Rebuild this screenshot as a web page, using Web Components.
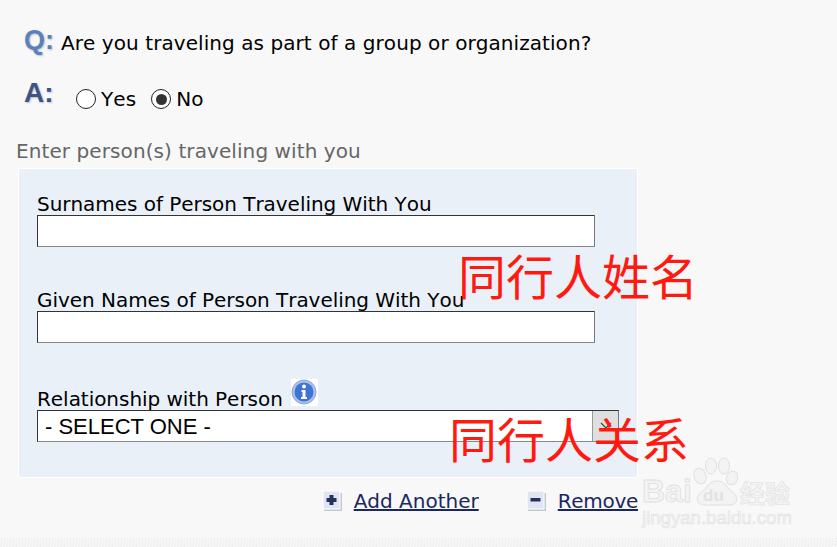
<!DOCTYPE html>
<html>
<head>
<meta charset="utf-8">
<style>
html, body { margin:0; padding:0; height:100%; }
body { background:#f8f8f8; width:837px; height:547px; overflow:hidden; font-family:"DejaVu Sans",sans-serif; color:#000; font-kerning:none; }
</style>
</head>
<body>
<visa-page>
  <qa-row slot="qa" kind="Q"><span>Are you traveling as part of a group or organization?</span></qa-row>
  <qa-row slot="qa" kind="A" class="answer"><radio-opt label="Yes"></radio-opt><radio-opt label="No" checked></radio-opt></qa-row>
  <companion-form slot="form"></companion-form>
  <link-row slot="links"></link-row>
</visa-page>

<script>
class VisaPage extends HTMLElement {
  constructor() {
    super();
    this.attachShadow({mode:'open'});
    this.shadowRoot.innerHTML = `
    <style>
      :host { display:block; position:relative; width:837px; height:547px; font-size:20px; overflow:hidden; }
      .wrap { display:flex; flex-direction:column; padding:22px 0 0 18px; }
      .heading { color:#666; margin:14px 0 5px -2px; line-height:24px; letter-spacing:.09px; }
      .dither { position:absolute; left:0; right:0; bottom:0; height:9px;
        background:repeating-conic-gradient(#f0f0f0 0 25%, #f8f8f8 0 50%) 0 0/3px 3px; }
      .note { position:absolute; color:#ff1a10; font:48px/56px "Noto Sans CJK SC",sans-serif; white-space:nowrap; }
      .n1 { left:458px; top:246px; }
      .n2 { left:449px; top:409px; }
      .mark { position:absolute; left:641px; top:456px; width:190px; height:76px; }
    </style>
    <div class="wrap">
      <slot name="qa"></slot>
      <div class="heading">Enter person(s) traveling with you</div>
      <slot name="form"></slot>
      <slot name="links"></slot>
    </div>
    <div class="dither"></div>
    <div class="note n1">同行人姓名</div>
    <div class="note n2">同行人关系</div>
    <svg class="mark" viewBox="0 0 190 76">
      <g fill="#f3f3f3" stroke="#e0e0e0" stroke-width="1">
        <ellipse cx="59" cy="20" rx="6" ry="8" transform="rotate(-20 59 20)"/>
        <ellipse cx="70" cy="10" rx="5.5" ry="8"/>
        <ellipse cx="83" cy="10" rx="5.5" ry="8"/>
        <ellipse cx="91" cy="22" rx="5.5" ry="7" transform="rotate(20 91 22)"/>
        <path d="M76 25c-8 0-9 6-14 10-5 3-7 7-5 11 2 4 10 3 19 3 9 0 17 1 19-3 2-4 0-8-5-11-5-4-6-10-14-10z"/>
      </g>
      <text x="1" y="46" font-family="Liberation Sans" font-weight="700" font-size="32" fill="#f3f3f3" stroke="#e0e0e0" stroke-width=".8">Bai</text>
      <text x="62" y="45" font-family="Liberation Sans" font-weight="700" font-size="17" fill="#e2e2e2">du</text>
      <text x="99" y="47" font-family="Noto Sans CJK SC" font-weight="700" font-size="25" fill="#f3f3f3" stroke="#e0e0e0" stroke-width=".6">经验</text>
      <text x="1" y="68" font-family="Liberation Sans" font-size="18.6" fill="#f3f3f3" stroke="#e2e2e2" stroke-width=".6">jingyan.baidu.com</text>
    </svg>`;
  }
}

class QaRow extends HTMLElement {
  constructor() {
    super();
    this.attachShadow({mode:'open'});
    const kind = this.getAttribute('kind');
    this.shadowRoot.innerHTML = `
    <style>
      :host { display:flex; align-items:flex-start; height:${kind == 'Q' ? 56 : 47}px; margin-left:6px; letter-spacing:.07px; }
      .tag { font:700 ${kind == 'Q' ? 27 : 28}px/26px "Liberation Sans",sans-serif; width:${kind == 'Q' ? 37 : 52}px; flex:none;
        color:${kind == 'Q' ? '#5a82b8' : '#3e5380'}; text-shadow:1px 1px 2px #b8c0d0; margin-top:${kind == 'Q' ? 5 : 2}px; letter-spacing:0; }
      .body { display:flex; align-items:center; line-height:24px; margin-top:9px; }
    </style>
    <div class="tag">${kind}:</div>
    <div class="body"><slot></slot></div>`;
  }
}

class RadioOpt extends HTMLElement {
  constructor() {
    super();
    this.attachShadow({mode:'open'});
    const on = this.hasAttribute('checked');
    this.shadowRoot.innerHTML = `
    <style>
      :host { display:inline-flex; align-items:center; margin-right:15px; }
      .ring { width:20px; height:20px; box-sizing:border-box; border:1px solid #222; border-radius:50%; background:#fff;
        display:flex; align-items:center; justify-content:center; margin:0 5px 0 0; }
      .dot { width:11px; height:11px; border-radius:50%; background:#333; }
    </style>
    <span class="ring">${on ? '<span class="dot"></span>' : ''}</span><span>${this.getAttribute('label')}</span>`;
  }
}

class FormField extends HTMLElement {
  constructor() {
    super();
    this.attachShadow({mode:'open'});
    this.shadowRoot.innerHTML = `
    <style>
      :host { display:block; }
      .lbl { line-height:22px; display:flex; align-items:flex-end; letter-spacing:-.04px; white-space:nowrap; }
      .box { display:block; width:558px; height:32px; box-sizing:border-box; background:#fff;
        border:1px solid; border-color:#333 #777 #888 #333; }
    </style>
    <div class="lbl">${this.getAttribute('label')}</div>
    <div class="box"></div>`;
  }
}

class SelectField extends HTMLElement {
  constructor() {
    super();
    this.attachShadow({mode:'open'});
    this.shadowRoot.innerHTML = `
    <style>
      :host { display:block; }
      .lbl { line-height:22px; display:flex; align-items:flex-end; letter-spacing:-.04px; white-space:nowrap; }
      .info { width:27px; height:27px; margin:0 0 4px 8px; background:#fff; flex:none; }
      .sel { display:flex; width:582px; height:32px; box-sizing:border-box; background:#fff;
        border:1px solid; border-color:#333 #777 #888 #333; align-items:center; }
      .val { flex:1; padding:1px 0 0 7px; font:22px/30px "Liberation Sans",sans-serif; }
      .btn { width:25px; height:30px; background:#dfdfdf; border-left:1px solid #999; display:flex; align-items:center; justify-content:center; }
    </style>
    <div class="lbl"><span>Relationship with Person</span>
      <svg class="info" viewBox="0 0 27 27">
        <circle cx="13" cy="13" r="12" fill="#a9c4e8" stroke="#8aa8d4"/>
        <circle cx="13" cy="13" r="9.5" fill="#3f74d6"/>
        <circle cx="13" cy="7.5" r="2" fill="#fff"/>
        <path d="M10.5 11h4v7h1.5v2h-6v-2h1.5v-5h-1z" fill="#fff"/>
      </svg></div>
    <div class="sel"><span class="val">- SELECT ONE -</span>
      <span class="btn"><svg width="14" height="14" viewBox="0 0 14 14"><path d="M2 4l5 5 5-5" fill="none" stroke="#444" stroke-width="1.2"/></svg></span></div>`;
  }
}

class CompanionForm extends HTMLElement {
  constructor() {
    super();
    this.attachShadow({mode:'open'});
    this.shadowRoot.innerHTML = `
    <style>
      :host { display:block; width:620px; height:310px; box-sizing:border-box; background:#e9f0f8;
        border:1px solid #fff; padding:24px 0 0 18px; }
      .stack { display:flex; flex-direction:column; gap:42px; }
      .last { margin-top:-6px; }
    </style>
    <div class="stack">
      <form-field label="Surnames of Person Traveling With You"></form-field>
      <form-field label="Given Names of Person Traveling With You"></form-field>
      <select-field class="last"></select-field>
    </div>`;
  }
}

class LinkRow extends HTMLElement {
  constructor() {
    super();
    this.attachShadow({mode:'open'});
    const icon = d => `<svg width="21" height="22" viewBox="0 0 21 22"><rect x="2" y="3" width="18" height="18" fill="#c4c8d0"/><rect x="1" y="1" width="17" height="18" fill="#dde6f2" stroke="#fff"/><path d="${d}" fill="#27315f"/></svg>`;
    this.shadowRoot.innerHTML = `
    <style>
      :host { display:flex; justify-content:flex-end; align-items:center; width:620px; margin-top:9px; height:28px; }
      a { color:#1b2760; text-decoration:underline; margin-left:11px; line-height:28px; }
      a.rm { letter-spacing:-.3px; }
      span.g { display:flex; align-items:center; margin-left:47px; }
      svg { display:block; }
    </style>
    <span class="g">${icon('M7.5 5h4v3h3v4h-3v3h-4v-3h-3V8h3z')}<a href="#">Add Another</a></span>
    <span class="g">${icon('M4.5 8h10v3.5h-10z')}<a class="rm" href="#">Remove</a></span>`;
  }
}

customElements.define('visa-page', VisaPage);
customElements.define('qa-row', QaRow);
customElements.define('radio-opt', RadioOpt);
customElements.define('form-field', FormField);
customElements.define('select-field', SelectField);
customElements.define('companion-form', CompanionForm);
customElements.define('link-row', LinkRow);
</script>
</body>
</html>
